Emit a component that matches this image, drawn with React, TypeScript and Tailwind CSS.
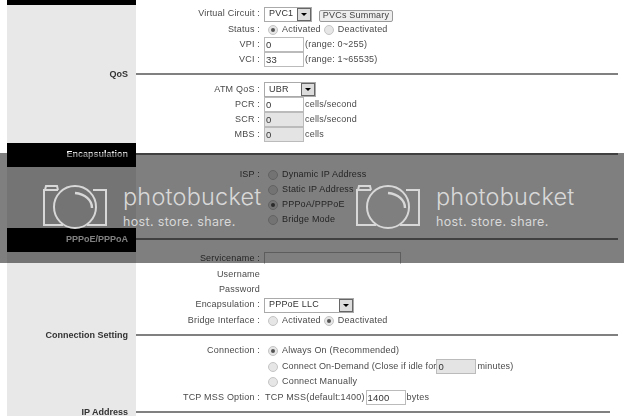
function Radio({ on, gap }: { on?: boolean; gap?: boolean }) {
  return (
    <span className={`size-[10px] rounded-full border border-[#c4c4c4] bg-[#e6e6e6] flex items-center justify-center shrink-0 mr-[4px] ${gap ? "ml-[3px]" : "ml-[4px]"}`}>
      {on && <span className="size-[4px] rounded-full bg-[#555]" />}
    </span>
  );
}

function Select({ value, width }: { value: string; width: string }) {
  return (
    <span className={`${width} h-[15px] border border-[#aaa] bg-white flex items-center justify-between pl-[4px] text-[#333] shrink-0`}>
      {value}
      <span className="w-[14px] h-[13px] bg-[#ddd] border border-[#666] flex items-center justify-center">
        <span className="border-x-[3px] border-x-transparent border-t-[3px] border-t-black" />
      </span>
    </span>
  );
}

function Field({ value, off }: { value?: string; off?: boolean }) {
  return (
    <span className={`h-[15px] w-10 border border-[#bbb] pl-px text-[9.5px] leading-none text-[#333] flex items-center shrink-0 ${off ? "bg-[#e4e4e4]" : "bg-white"}`}>
      {value}
    </span>
  );
}

function Row({ label, children, h = "h-[15.2px]" }: { label?: string; children?: React.ReactNode; h?: string }) {
  return (
    <div className={`${h} flex items-center ml-[129px]`}>
      <div className="w-[124px] text-right whitespace-nowrap shrink-0">{label}</div>
      <div className="flex items-center whitespace-nowrap pl-[4px]">{children}</div>
    </div>
  );
}

function Section({ title, dark, short, h = "h-[15.35px]" }: { title: string; dark?: boolean; short?: boolean; h?: string }) {
  return (
    <div className={`flex items-center ${dark ? "h-6" : h}`}>
      <div className={`w-[129px] h-full flex items-center justify-end pr-2 font-bold tracking-normal ${dark ? "bg-black text-white" : "text-[#333]"}`}>{title}</div>
      <div className={`flex-1 h-[2px] mb-[1px] bg-[#808080] ${short ? "mr-[14px]" : "mr-[6px]"}`} />
    </div>
  );
}

function Watermark({ className }: { className: string }) {
  return (
    <div className={`absolute top-[184px] flex items-start text-[#d8d8d8] ${className}`}>
      <svg width="64" height="44" viewBox="0 0 64 44" fill="none" stroke="currentColor" strokeWidth="2" className="mr-[16px] mt-px">
        <path d="M15 5 L1 5 L1 40 L20 40" />
        <path d="M2 5 L3 1 L14 1 L15 5" />
        <path d="M50 5 L63 5 L63 40 L44 40" />
        <circle cx="32" cy="22" r="21" />
        <path d="M32 8 C42 9 49 15 49 23" strokeWidth="2.4" />
      </svg>
      <div className="font-['Inter',sans-serif]">
        <div className="text-[23.5px] leading-[26px] font-light">photobucket</div>
        <div className="text-[12.5px] leading-[16px] mt-[4px] tracking-[0.35px]">host. store. share.</div>
      </div>
    </div>
  );
}

const low = "h-[15.35px]";
const isp = "h-[15px]";

export default function App() {
  return (
    <div className="relative w-[624px] h-[416px] overflow-hidden bg-white font-['Liberation_Sans',sans-serif] text-[9px] tracking-[0.2px] text-[#4a4a4a]">
      <div className="absolute left-[7px] top-0 bottom-0 w-[129px] bg-[#e8e8e8]" />
      <div className="relative ml-[7px] blur-[0.35px]">
        <div className="h-[5px] w-[129px] bg-black" />
        <div className="h-[17px] pt-px flex items-center ml-[129px]">
          <div className="w-[124px] text-right shrink-0">Virtual Circuit :</div>
          <div className="flex items-center pl-[4px] whitespace-nowrap">
            <Select value="PVC1" width="w-[48px]" />
            <span className="ml-[7px] mt-[3px] h-[12px] w-[74px] flex items-center justify-center border border-[#999] rounded-[2px] bg-[#eee] text-[#444]">PVCs Summary</span>
          </div>
        </div>
        <Row label="Status :"><Radio on />Activated<Radio gap />Deactivated</Row>
        <Row label="VPI :"><Field value="0" /><span className="ml-px">(range: 0~255)</span></Row>
        <Row label="VCI :"><Field value="33" /><span className="ml-px">(range: 1~65535)</span></Row>
        <Section title="QoS" h="h-[14.2px]" />
        <Row label="ATM QoS :"><Select value="UBR" width="w-[52px]" /></Row>
        <Row label="PCR :"><Field value="0" /><span className="ml-px">cells/second</span></Row>
        <Row label="SCR :"><Field value="0" off /><span className="ml-px">cells/second</span></Row>
        <Row label="MBS :"><Field value="0" off /><span className="ml-px">cells</span></Row>
        <Section title="Encapsulation" dark />
        <div className="pt-px">
          <Row label="ISP :" h={isp}><Radio />Dynamic IP Address</Row>
          <Row h={isp}><Radio />Static IP Address</Row>
          <Row h={isp}><Radio on />PPPoA/PPPoE</Row>
          <Row h={isp}><Radio />Bridge Mode</Row>
        </div>
        <Section title="PPPoE/PPPoA" dark />
        <div className="h-[15.35px] flex ml-[129px]">
          <div className="w-[124px] text-right self-center shrink-0">Servicename :</div>
          <div className="pl-[4px]">
            <div className="w-[137px] h-3 border border-b-0 border-[#bbb] bg-white" />
          </div>
        </div>
        <Row label="Username" h={low} />
        <Row label="Password" h={low} />
        <Row label="Encapsulation :" h={low}><Select value="PPPoE LLC" width="w-[90px]" /></Row>
        <Row label="Bridge Interface :" h={low}><Radio />Activated<Radio gap on />Deactivated</Row>
        <Section title="Connection Setting" />
        <Row label="Connection :" h={low}><Radio on />Always On (Recommended)</Row>
        <Row h={low}>
          <Radio />
          <span className="tracking-[0.12px]">Connect On-Demand (Close if idle for</span>
          <Field value="0" off />
          <span className="ml-px">minutes)</span>
        </Row>
        <Row h={low}><Radio />Connect Manually</Row>
        <Row label="TCP MSS Option :" h={low}>
          <span className="ml-px mr-px">TCP MSS(default:1400)</span>
          <Field value="1400" />
          <span className="ml-px">bytes</span>
        </Row>
        <Section title="IP Address" short />
      </div>
      <div className="absolute inset-x-0 top-[153px] h-[110px] bg-black/50" />
      <Watermark className="left-[43px]" />
      <Watermark className="left-[356px]" />
    </div>
  );
}
